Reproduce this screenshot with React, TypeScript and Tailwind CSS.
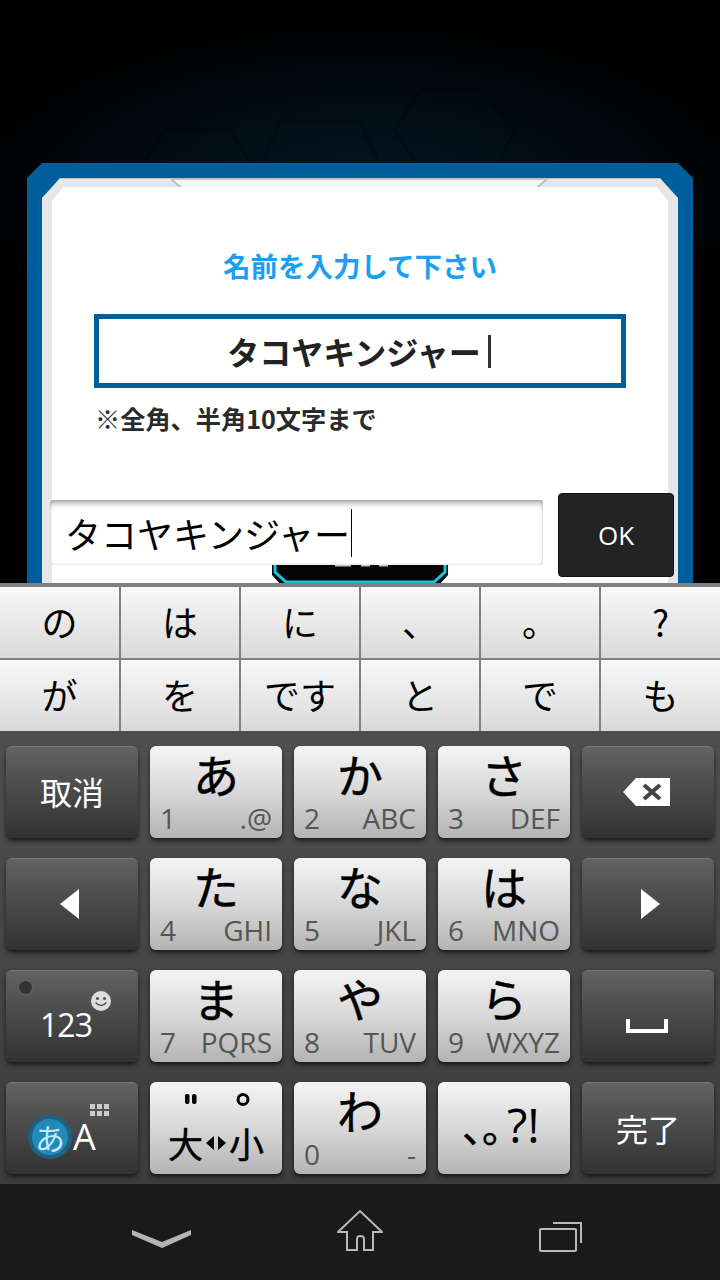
import type { ReactNode } from "react";

const suggestions = ["の", "は", "に", "、", "。", "?", "が", "を", "です", "と", "で", "も"];

const jp = "font-['Noto_Sans_CJK_JP',sans-serif]";
const lightKey = "h-[92px] rounded-[6px] bg-gradient-to-b from-[#f4f4f4] via-[#d8d8d8] to-[#b4b4b4] shadow-[0_3px_4px_rgba(0,0,0,0.6)]";

function LightKey({ kana, num, letters }: { kana: string; num: string; letters: string }) {
  return (
    <div className={`${lightKey} flex flex-col items-center`}>
      <div className={`${jp} h-[57px] text-[46px] leading-[54px] text-black [-webkit-text-stroke:0.5px_black]`}>{kana}</div>
      <div className="w-full px-[10px] flex justify-between items-center h-[30px] text-[28px] leading-[30px] text-[#555] font-['Open_Sans',sans-serif]">
        <span>{num}</span>
        <span>{letters}</span>
      </div>
    </div>
  );
}

function DarkKey({ children }: { children?: ReactNode }) {
  return (
    <div className="relative h-[92px] rounded-[6px] bg-gradient-to-b from-[#626262] to-[#323232] border-t border-[#777] shadow-[0_3px_4px_rgba(0,0,0,0.6)] flex items-center justify-center text-white">
      {children}
    </div>
  );
}

export default function App() {
  return (
    <div className="w-[720px] h-[1280px] flex flex-col overflow-hidden bg-black">
      {/* game screen */}
      <div className="relative h-[583px] shrink-0 overflow-hidden pt-[163px] px-[27px] bg-[radial-gradient(ellipse_400px_170px_at_360px_190px,#021824,#020c13_50%,#000_100%)]">
        <svg className="absolute left-[120px] top-[60px]" width="480" height="110" fill="none" stroke="#000" strokeWidth="3" opacity="0.2">
          <path d="M140 110 L160 60 L240 60 L262 110" />
          <path d="M300 110 L275 70 L300 30 L360 30 L395 70 L375 110" />
          <path d="M20 110 L45 70 L110 70 L135 110" />
        </svg>

        {/* dialog frame */}
        <div className="relative h-[520px] bg-[#015e9c] p-[15px] [clip-path:polygon(15px_0,651px_0,666px_15px,666px_100%,0_100%,0_15px)]">
          <div className="relative h-full bg-[#e6e6e6] px-[10px] pt-[8px] border-t border-[#c4c4bc] [clip-path:polygon(18px_0,618px_0,636px_20px,636px_100%,0_100%,0_20px)]">
            <svg className="absolute left-[129px] top-0" width="378" height="15">
              <path d="M0 0 L15 13 L361 13 L376 0 Z" fill="#f6f6f6" stroke="#bdbdbd" strokeWidth="2" />
            </svg>
            <div className="h-full bg-white flex flex-col items-center [clip-path:polygon(11px_0,605px_0,616px_14px,616px_100%,0_100%,0_14px)]">
              <h1 className={`${jp} mt-[58px] text-[27.5px] leading-[40px] font-bold text-[#1b9ff5]`}>名前を入力して下さい</h1>

              <div className={`${jp} mt-[29px] w-[532px] h-[74px] border-[5px] border-[#005d98] flex items-center justify-center pr-[2px] text-[32px] font-bold text-[#222]`}>
                タコヤキンジャー
                <span className="ml-[7px] w-[3px] h-[33px] bg-[#333]" />
              </div>

              <p className={`${jp} mt-[14px] w-[532px] pl-[1px] text-[25.2px] leading-[32px] font-bold text-[#2a2a2a]`}>※全角、半角10文字まで</p>

              {/* button behind the input bar */}
              <svg className="mt-[103px] shrink-0" width="178" height="50">
                <path d="M1 0 V38 L11 49 H167 L177 38 V0 Z" fill="#050505" />
                <path d="M4 0 V35 L15 45 H163 L174 35 V0" fill="none" stroke="#12c8ea" strokeWidth="3" />
                <path d="M64 28 H80 M90 28 H99 M108 28 H117" stroke="#b9c6cc" strokeWidth="3" />
              </svg>
            </div>
          </div>
        </div>

        {/* text entry bar over the dialog */}
        <div className="absolute left-[50px] top-[493px] w-[624px] h-[84px] flex items-start justify-between">
          <div className={`${jp} mt-[7px] w-[493px] h-[65px] rounded-[3px] bg-white shadow-[inset_0_6px_6px_-3px_rgba(0,0,0,0.35),inset_0_0_3px_rgba(0,0,0,0.2)] flex items-center pl-[15px] text-[36px] text-black`}>
            タコヤキンジャー
            <span className="ml-px w-px h-[48px] bg-black" />
          </div>
          <div className="w-[116px] h-[84px] rounded-[4px] bg-[#232323] border border-[#111] flex items-center justify-center text-[26px] text-white font-['Open_Sans',sans-serif]">
            OK
          </div>
        </div>
      </div>

      {/* keyboard */}
      <div className="h-[601px] shrink-0 flex flex-col bg-gradient-to-b from-[#555] to-[#3c3c3c]">
        <div className="pt-[4px] bg-[#808080]">
          <div className="grid grid-cols-[121px_repeat(4,120px)_119px] gap-y-[2px]">
            {suggestions.map((s, i) => (
              <div
                key={i}
                className={`${jp} h-[71px] pb-[4px] border-r-2 border-[#808080] [&:nth-child(6n)]:border-r-0 bg-gradient-to-b from-[#f8f8f8] to-[#dadada] flex items-center justify-center text-[36px] text-black`}
              >
                {s}
              </div>
            ))}
          </div>
        </div>

        <div className="mt-[15px] px-[6px] grid grid-cols-5 gap-x-[12px] gap-y-[20px]">
          <DarkKey>
            <span className={`${jp} text-[32px] mb-[3px]`}>取消</span>
          </DarkKey>
          <LightKey kana="あ" num="1" letters=".@" />
          <LightKey kana="か" num="2" letters="ABC" />
          <LightKey kana="さ" num="3" letters="DEF" />
          <DarkKey>
            <svg className="mr-[2px] mb-[2px]" width="48" height="28" viewBox="0 0 48 28">
              <path d="M13 0 H47 V28 H13 L0 14 Z" fill="#fff" />
              <path d="M21 7 L37 21 M37 7 L21 21" stroke="#444" strokeWidth="4" />
            </svg>
          </DarkKey>

          <DarkKey>
            <svg className="mr-[6px] mb-[2px]" width="19" height="30" viewBox="0 0 19 30">
              <path d="M19 0 V30 L0 15 Z" fill="#fff" />
            </svg>
          </DarkKey>
          <LightKey kana="た" num="4" letters="GHI" />
          <LightKey kana="な" num="5" letters="JKL" />
          <LightKey kana="は" num="6" letters="MNO" />
          <DarkKey>
            <svg className="ml-[4px] mb-[2px]" width="19" height="30" viewBox="0 0 19 30">
              <path d="M0 0 V30 L19 15 Z" fill="#fff" />
            </svg>
          </DarkKey>

          <DarkKey>
            <span className="absolute left-[12px] top-[9px] w-[15px] h-[15px] rounded-full bg-[#333] border border-[#666]" />
            <svg className="absolute left-[85px] top-[20px]" width="20" height="20" viewBox="0 0 20 20">
              <circle cx="10" cy="10" r="10" fill="#ddd" />
              <circle cx="6.5" cy="7.5" r="1.6" fill="#555" />
              <circle cx="13.5" cy="7.5" r="1.6" fill="#555" />
              <path d="M4.5 11.5 Q10 17.5 15.5 11.5" fill="none" stroke="#555" strokeWidth="1.5" />
            </svg>
            <span className="mt-[16px] mr-[12px] text-[32px] tracking-[-1px] font-['Open_Sans',sans-serif]">123</span>
          </DarkKey>
          <LightKey kana="ま" num="7" letters="PQRS" />
          <LightKey kana="や" num="8" letters="TUV" />
          <LightKey kana="ら" num="9" letters="WXYZ" />
          <DarkKey>
            <svg className="mt-[18px] mr-[2px]" width="42" height="14" viewBox="0 0 42 14">
              <path d="M2 0 V12 H40 V0" fill="none" stroke="#fff" strokeWidth="4" />
            </svg>
          </DarkKey>

          <DarkKey>
            <svg className="absolute left-[84px] top-[21px]" width="20" height="12" viewBox="0 0 20 12" fill="#ccc">
              <rect x="0" y="0" width="5" height="5" />
              <rect x="7" y="0" width="5" height="5" />
              <rect x="14" y="0" width="5" height="5" />
              <rect x="0" y="7" width="5" height="5" />
              <rect x="7" y="7" width="5" height="5" />
              <rect x="14" y="7" width="5" height="5" />
            </svg>
            <div className="mt-[16px] mr-[20px] flex items-center">
              <span className={`${jp} w-[44px] h-[44px] rounded-full bg-[#2389b8] border-[4px] border-[#1d6283] flex items-center justify-center text-[30px] leading-none text-[#c4ecff]`}>
                あ
              </span>
              <span className="ml-[1px] text-[36px] leading-none font-['Open_Sans',sans-serif]">A</span>
            </div>
          </DarkKey>
          <div className={`${lightKey} flex flex-col items-center`}>
            <svg className="mt-[11px] ml-[35px] self-start" width="66" height="14" viewBox="0 0 66 14">
              <rect x="0" y="1" width="4.5" height="10" rx="2" fill="#000" />
              <rect x="7" y="1" width="4.5" height="10" rx="2" fill="#000" />
              <circle cx="58" cy="6.5" r="5" fill="none" stroke="#000" strokeWidth="3" />
            </svg>
            <div className={`${jp} mt-[14px] flex items-center text-[35px] leading-[44px] text-black [-webkit-text-stroke:0.5px_black]`}>
              大
              <svg className="mx-[3px]" width="20" height="14" viewBox="0 0 20 14">
                <path d="M8 0 V14 L0 7 Z M12 0 V14 L20 7 Z" fill="#000" />
              </svg>
              小
            </div>
          </div>
          <LightKey kana="わ" num="0" letters="-" />
          <div className={`${lightKey} flex items-center pl-[24px] pb-[6px]`}>
            <span className={`${jp} w-[20px] text-[40px] leading-none text-black [-webkit-text-stroke:0.5px_black]`}>、</span>
            <span className={`${jp} w-[20px] text-[40px] leading-none text-black [-webkit-text-stroke:0.5px_black]`}>。</span>
            <span className="ml-[5px] text-[47px] leading-none text-black font-['Open_Sans',sans-serif]">?!</span>
          </div>
          <DarkKey>
            <span className={`${jp} text-[32px] mb-[2px]`}>完了</span>
          </DarkKey>
        </div>
      </div>

      {/* nav bar */}
      <nav className="flex-1 bg-[#1a1a1a] flex items-center pl-[132px]">
        <svg width="59" height="18" viewBox="0 0 59 18" className="mt-[13px]">
          <path d="M0 0 L30 12 L59 0 V5 L30 18 L0 5 Z" fill="#b4b4b4" />
        </svg>
        <svg width="46" height="42" viewBox="0 0 46 42" className="ml-[146px] mt-[-2px]" fill="none" stroke="#b8b8b8" strokeWidth="2">
          <path d="M1 22 L23 1 L45 22 H36 V40 H27 V29 Q27 26 23 26 Q20 26 20 29 V40 H10 V22 Z" />
        </svg>
        <svg width="43" height="30" viewBox="0 0 43 30" className="ml-[156px] mt-[10px]" fill="none" stroke="#b8b8b8" strokeWidth="2">
          <rect x="1" y="7" width="36" height="22" rx="1" />
          <path d="M14 1 H42 V21" />
        </svg>
      </nav>
    </div>
  );
}
